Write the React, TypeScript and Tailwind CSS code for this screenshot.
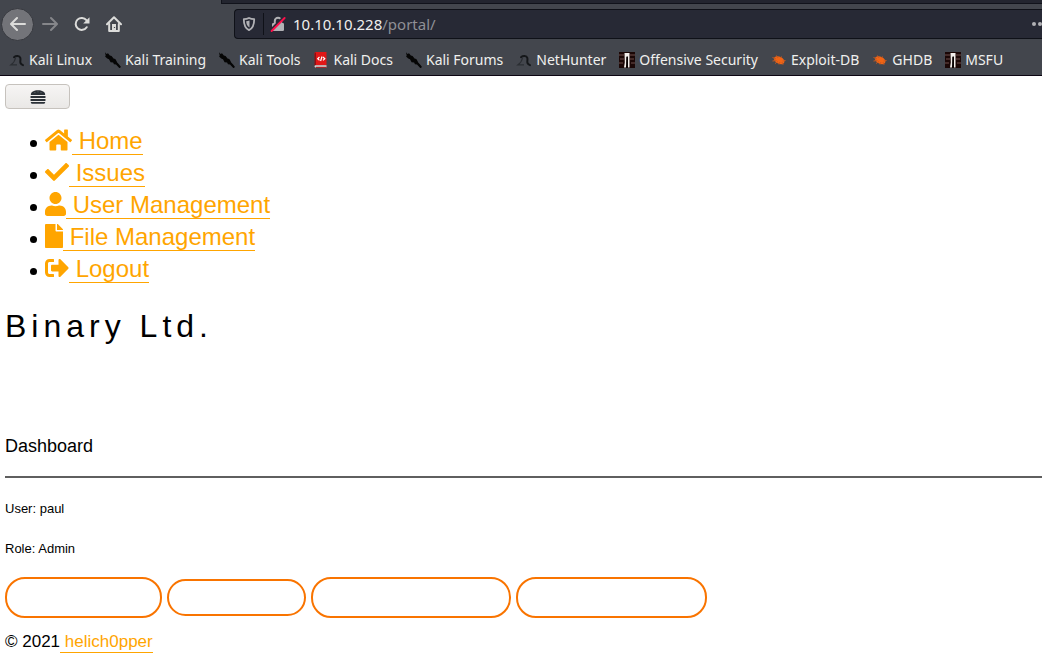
import type { ReactNode } from "react";
import { FaCheck, FaFile, FaHome, FaSignOutAlt, FaUser } from "react-icons/fa";

function BackIcon() {
  return (
    <svg viewBox="0 0 16 16" className="size-4" fill="none" stroke="currentColor" strokeWidth="2" strokeLinecap="round" strokeLinejoin="round">
      <path d="M15 8H1.2M7 2 1 8l6 6" />
    </svg>
  );
}

function ForwardIcon() {
  return (
    <svg viewBox="0 0 16 16" className="size-4" fill="none" stroke="currentColor" strokeWidth="2" strokeLinecap="round" strokeLinejoin="round">
      <path d="M1 8h13.8M9 2l6 6-6 6" />
    </svg>
  );
}

function ReloadIcon() {
  return (
    <svg viewBox="0 0 16 16" className="size-4" fill="none" stroke="currentColor" strokeWidth="2">
      <path d="M12.7 11.2A6 6 0 1 1 12.4 4.2" strokeLinecap="round" />
      <path d="M15.5 1.2v6.3H9.2z" fill="currentColor" stroke="none" />
    </svg>
  );
}

function BrowserHomeIcon() {
  return (
    <svg viewBox="0 0 16 16" className="size-4" fill="none" stroke="currentColor" strokeWidth="2" strokeLinecap="round" strokeLinejoin="round">
      <path d="M1 8.2 8 1.2l7 7" />
      <path d="M3.2 8v7h9.600V8" />
      <path d="M6 15V8h4v7z" fill="currentColor" stroke="none" />
      <path d="M8.500 11v1" stroke="#43464d" strokeWidth="1.200" strokeLinecap="butt" />
    </svg>
  );
}

function ShieldIcon() {
  return (
    <svg viewBox="0 0 16 16" className="size-4" fill="none">
      <path d="M8 2c1.7.9 3.400 1.200 5.200 1.200 0 4.800-.7 8.800-5.200 10.900C3.500 12 2.800 8 2.800 3.200 4.600 3.200 6.300 2.900 8 2z" stroke="#b1b1b5" strokeWidth="1.800" strokeLinejoin="round" />
      <path d="M8.500 4.600v7c-2.600-1.500-3.200-3.700-3.300-6.300C6.300 5.300 7.400 5 8.500 4.600z" fill="#b1b1b5" />
    </svg>
  );
}

function InsecureIcon() {
  return (
    <svg viewBox="0 0 16 16" className="size-4" fill="none">
      <path d="M4.800 8V5a3.200 3.200 0 0 1 6.400 0v3" stroke="#b1b1b5" strokeWidth="2" />
      <rect x="2" y="7" width="12" height="8" rx="1.200" fill="#b1b1b5" />
      <path d="M1.200 13.600 13.400 1.400" stroke="#272935" strokeWidth="2.400" />
      <path d="M1.600 15 14.600 2" stroke="#ff0f4b" strokeWidth="1.800" strokeLinecap="round" />
    </svg>
  );
}

function DragonIcon() {
  return (
    <svg viewBox="0 0 16 16" className="size-4" fill="none">
      <path d="M5 5.200c2-1.800 5.500-1.600 6.300.6.700 2-.6 3.600.3 5.400.5 1 1.400 1.500 2.400 1.900" stroke="#15171a" strokeWidth="2" strokeLinecap="round" />
      <path d="M6.500 6C6 8.500 4.500 11 2 12.800h6" stroke="#2b2e33" strokeWidth="1.200" />
    </svg>
  );
}

function DaggerIcon() {
  return (
    <svg viewBox="0 0 16 16" className="size-4" fill="#050505">
      <path d="M0 .3 1.500 2 3 1.300l1.800 2.200 1.800.6 1.900 2.500 1.800.4 1.200 2 .7 1.600 2.100 2.100 1.700 2.300-1.600 1.200-3.400-3.700-2-.2-.9-1.900-2.500-.2-1.600-3-1.800-.6L.1 4.500l.6-1z" />
    </svg>
  );
}

function BookIcon() {
  return (
    <svg viewBox="0 0 16 16" className="size-4" fill="none">
      <path d="M1.500 1.500c0-1 .6-1.500 1.500-1.500h10.500v13.200H3z" fill="#e01717" />
      <path d="M1.500 1.500 3 .2v13l-1.500 1.200z" fill="#8d1014" />
      <path d="M1.500 14.300c0-.8.600-1.100 1.500-1.100h10.500v2.300H3c-.9 0-1.500-.4-1.500-1.200z" fill="#d5d5d5" />
      <path d="M3 15.300h10.500" stroke="#a41214" />
      <path d="M6.500 5 4.700 6.700l1.800 1.700M10 5l1.800 1.700L10 8.400M9 4.500 7.600 9" stroke="#fff" strokeWidth="1.200" />
    </svg>
  );
}

function OffsecIcon() {
  return (
    <svg viewBox="0 0 16 16" className="size-4" fill="none">
      <path d="M0 0h16v16H0z" fill="#1b0706" />
      <path d="M0 3h5M11 3h5M1 7h4M11 7h4M0 11h4M12 11h4" stroke="#70504c" strokeWidth="1.200" />
      <path d="M5.500 1h5v14.500H9V5H7.500v8L7 15.500H5l.8-5z" fill="#f3eeeb" />
      <path d="M7.500 4.500H9v11H7z" fill="#080202" />
    </svg>
  );
}

function BugIcon() {
  return (
    <svg viewBox="0 0 16 16" className="size-4" fill="none">
      <ellipse cx="8.200" cy="8.200" rx="5.600" ry="3.500" transform="rotate(28 8.200 8.200)" fill="#f26414" />
      <path d="M1.500 5.500 5 7M5.500 3.500 7 6M10.500 4.500 9.500 6M1.500 9l4-.5M4 11.500l3-2M8 12.500l1-2.500M12 12.800 11 10M14.500 8.500l-3 .5" stroke="#c85a20" strokeWidth="1" />
    </svg>
  );
}

function BurgerIcon() {
  return (
    <svg viewBox="0 0 16 14" className="h-3.5 w-4" fill="#2b3137">
      <path d="M.8 5C.8 1.800 4 .3 8 .3s7.200 1.500 7.200 4.700z" />
      <rect x=".3" y="6" width="15.400" height="2" rx=".9" />
      <rect x=".3" y="9" width="15.400" height="2" rx=".9" />
      <path d="M.8 12h14.400c0 1.200-.6 1.800-1.600 1.800H2.400c-1 0-1.600-.6-1.600-1.800z" />
      <path d="M4.500 2.600h.8M7.600 1.800h.8M10.600 2.600h.8" stroke="#9aa0a3" strokeWidth=".7" />
    </svg>
  );
}

const bookmarks: { label: string; icon: ReactNode }[] = [
  { label: "Kali Linux", icon: <DragonIcon /> },
  { label: "Kali Training", icon: <DaggerIcon /> },
  { label: "Kali Tools", icon: <DaggerIcon /> },
  { label: "Kali Docs", icon: <BookIcon /> },
  { label: "Kali Forums", icon: <DaggerIcon /> },
  { label: "NetHunter", icon: <DragonIcon /> },
  { label: "Offensive Security", icon: <OffsecIcon /> },
  { label: "Exploit-DB", icon: <BugIcon /> },
  { label: "GHDB", icon: <BugIcon /> },
  { label: "MSFU", icon: <OffsecIcon /> },
];

const links: { label: string; icon: ReactNode }[] = [
  { label: "Home", icon: <FaHome className="h-6 w-[27px]" /> },
  { label: "Issues", icon: <FaCheck className="size-6" /> },
  { label: "User Management", icon: <FaUser className="h-6 w-[21px]" /> },
  { label: "File Management", icon: <FaFile className="h-6 w-[18px]" /> },
  { label: "Logout", icon: <FaSignOutAlt className="size-6" /> },
];

const actions = [
  { label: "Check In", size: "h-[41px] w-[157px]" },
  { label: "Tasks", size: "h-[37px] w-[139px]" },
  { label: "Order Management", size: "h-[41px] w-[200px]" },
  { label: "User Directory", size: "h-[41px] w-[191px]" },
];

function BrowserChrome() {
  return (
    <header className="border-b border-[#0c0512] bg-[#43464d] font-['Noto_Sans',sans-serif] text-[#f0f0ee]">
      <div className="flex h-1">
        <div className="w-[221px]" />
        <div className="flex-1 border-b border-l border-[#11131b] bg-[#23252f]" />
      </div>
      <div className="flex h-10 items-center">
        <nav aria-label="Browser" className="flex w-[234px] items-center pl-px text-[#dcdcda]">
          <button aria-label="Back" className="flex size-[33px] items-center justify-center rounded-full border border-[#37393f] bg-[#737479]">
            <BackIcon />
          </button>
          <button aria-label="Forward" className="flex size-8 items-center justify-center text-[#85868a]">
            <ForwardIcon />
          </button>
          <button aria-label="Reload" className="flex size-8 items-center justify-center">
            <ReloadIcon />
          </button>
          <button aria-label="Home page" className="flex size-8 items-center justify-center">
            <BrowserHomeIcon />
          </button>
        </nav>
        <div className="flex h-[30px] min-w-0 flex-1 items-center rounded-l border border-r-0 border-[#0f1118] bg-[#272935] text-[15px]">
          <span className="flex h-full items-center px-1.5">
            <ShieldIcon />
          </span>
          <span className="h-[22px] w-px bg-[#0f1118]" />
          <span className="pl-1.5">
            <InsecureIcon />
          </span>
          <span className="flex-1 pl-[7px] leading-5">
            10.10.10.228<span className="text-[#8f9096]">/portal/</span>
          </span>
          <button aria-label="Page actions" className="w-2.5 overflow-hidden">
            <svg viewBox="0 0 16 16" className="size-4" fill="#b1b1b5">
              <circle cx="2" cy="8" r="2" />
              <circle cx="8" cy="8" r="2" />
              <circle cx="14" cy="8" r="2" />
            </svg>
          </button>
        </div>
      </div>
      <nav aria-label="Bookmarks" className="flex h-[31px] items-center gap-[13px] overflow-hidden pl-[9px] text-sm leading-5">
        {bookmarks.map((b) => (
          <a key={b.label} href="#" className="flex shrink-0 items-center gap-1 whitespace-nowrap">
            {b.icon}
            {b.label}
          </a>
        ))}
      </nav>
    </header>
  );
}

export default function App() {
  return (
    <div className="min-h-screen bg-white font-['Liberation_Sans',Arial,sans-serif] text-black">
      <BrowserChrome />
      <main className="pt-2 pl-[5px]">
        <button
          aria-label="Menu"
          className="flex h-[25px] w-[65px] items-center justify-center rounded border border-[#c6c2bd] bg-linear-to-b from-[#f6f5f4] to-[#eae8e6]"
        >
          <BurgerIcon />
        </button>
        <ul className="mt-4 pl-[25px] text-2xl leading-8">
          {links.map((l) => (
            <li key={l.label} className="flex h-8 items-center gap-2 before:mt-1 before:size-[7px] before:rounded-full before:bg-black">
              <a href="#" className="flex h-8 items-start text-[#ffa500]">
                <span className="pt-[3px]">{l.icon}</span>
                <span className="h-[30px] border-b border-[#ffa500] whitespace-pre"> {l.label}</span>
              </a>
            </li>
          ))}
        </ul>
        <h1 className="mt-[21px] text-[32px] leading-10 tracking-[5px]">Binary Ltd.</h1>
        <h2 className="mt-[86px] text-lg leading-7">Dashboard</h2>
        <hr className="mt-4 border-t-2 border-[#5f5f5f]" />
        <p className="mt-[21px] text-[13px] leading-5">User: paul</p>
        <p className="mt-5 text-[13px] leading-5">Role: Admin</p>
        <div className="mt-[18px] flex flex-wrap items-center gap-[5px]">
          {actions.map((a) => (
            <button key={a.label} aria-label={a.label} className={`${a.size} rounded-[20px] border-2 border-[#f97400] bg-white`} />
          ))}
        </div>
        <footer className="mt-3.5 pb-3 text-[17px] leading-5">
          © 2021
          <a href="#" className="inline-block border-b border-[#ffa500] whitespace-pre text-[#ffa500]"> helich0pper</a>
        </footer>
      </main>
    </div>
  );
}
